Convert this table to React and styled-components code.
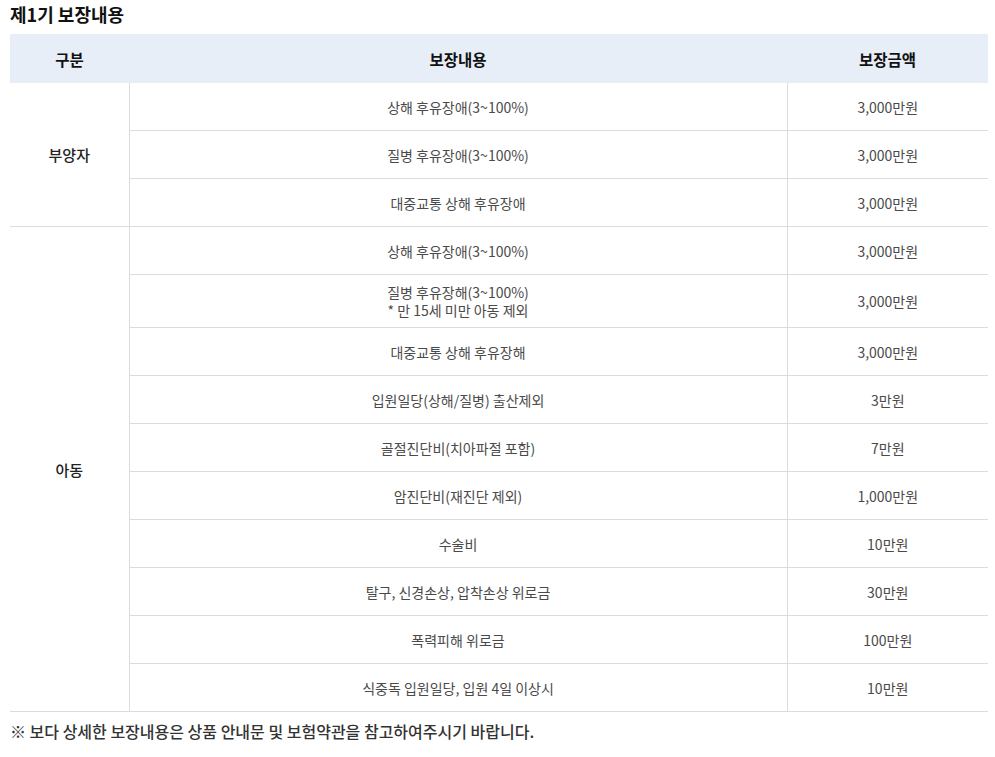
import React from 'react';
import styled, { createGlobalStyle } from 'styled-components';

const GlobalStyle = createGlobalStyle`
  body {
    margin: 0;
    background: #fff;
    font-family: "Noto Sans CJK KR", "Noto Sans", sans-serif;
  }
`;

const Wrap = styled.div`
  padding: 0 7px 0 10px;
`;

const Title = styled.h3`
  margin: 0;
  padding-top: 2px;
  height: 32px;
  font-size: 18px;
  font-weight: 700;
  color: #111;
  line-height: 24px;
`;

const Table = styled.table`
  width: 100%;
  border-collapse: collapse;
  table-layout: fixed;
`;

const Th = styled.th`
  height: 49px;
  padding: 0;
  background: #e8eef7;
  font-size: 15.5px;
  font-weight: 700;
  color: #111;
  text-align: center;
`;

const Group = styled.td`
  border-bottom: 1px solid #dcdcdc;
  border-right: 1px solid #dcdcdc;
  font-size: 15px;
  font-weight: 500;
  color: #222;
  text-align: center;
`;

const Cell = styled.td`
  height: 31px;
  padding: 8px 0;
  border-bottom: 1px solid #dcdcdc;
  border-right: ${(p) => (p.$last ? 'none' : '1px solid #dcdcdc')};
  font-size: 14px;
  line-height: 18px;
  color: #4a4a4a;
  text-align: center;
`;

const Line = styled.span`
  display: block;
`;

const Note = styled.p`
  margin: 7px 0 0;
  font-size: 16px;
  font-weight: 500;
  color: #333;
`;

const parent = [
  ['상해 후유장애(3~100%)', '3,000만원'],
  ['질병 후유장애(3~100%)', '3,000만원'],
  ['대중교통 상해 후유장애', '3,000만원'],
];

const child = [
  ['상해 후유장애(3~100%)', '3,000만원'],
  [['질병 후유장해(3~100%)', '* 만 15세 미만 아동 제외'], '3,000만원'],
  ['대중교통 상해 후유장해', '3,000만원'],
  ['입원일당(상해/질병) 출산제외', '3만원'],
  ['골절진단비(치아파절 포함)', '7만원'],
  ['암진단비(재진단 제외)', '1,000만원'],
  ['수술비', '10만원'],
  ['탈구, 신경손상, 압착손상 위로금', '30만원'],
  ['폭력피해 위로금', '100만원'],
  ['식중독 입원일당, 입원 4일 이상시', '10만원'],
];

function Rows({ label, items }) {
  return items.map(([desc, amount], i) => (
    <tr key={i}>
      {i === 0 && <Group rowSpan={items.length}>{label}</Group>}
      <Cell>
        {Array.isArray(desc) ? desc.map((d) => <Line key={d}>{d}</Line>) : desc}
      </Cell>
      <Cell $last>{amount}</Cell>
    </tr>
  ));
}

export default function App() {
  return (
    <Wrap>
      <GlobalStyle />
      <Title>제1기 보장내용</Title>
      <Table>
        <colgroup>
          <col style={{ width: 119 }} />
          <col />
          <col style={{ width: 201 }} />
        </colgroup>
        <thead>
          <tr>
            <Th>구분</Th>
            <Th>보장내용</Th>
            <Th>보장금액</Th>
          </tr>
        </thead>
        <tbody>
          <Rows label="부양자" items={parent} />
          <Rows label="아동" items={child} />
        </tbody>
      </Table>
      <Note>※ 보다 상세한 보장내용은 상품 안내문 및 보험약관을 참고하여주시기 바랍니다.</Note>
    </Wrap>
  );
}
